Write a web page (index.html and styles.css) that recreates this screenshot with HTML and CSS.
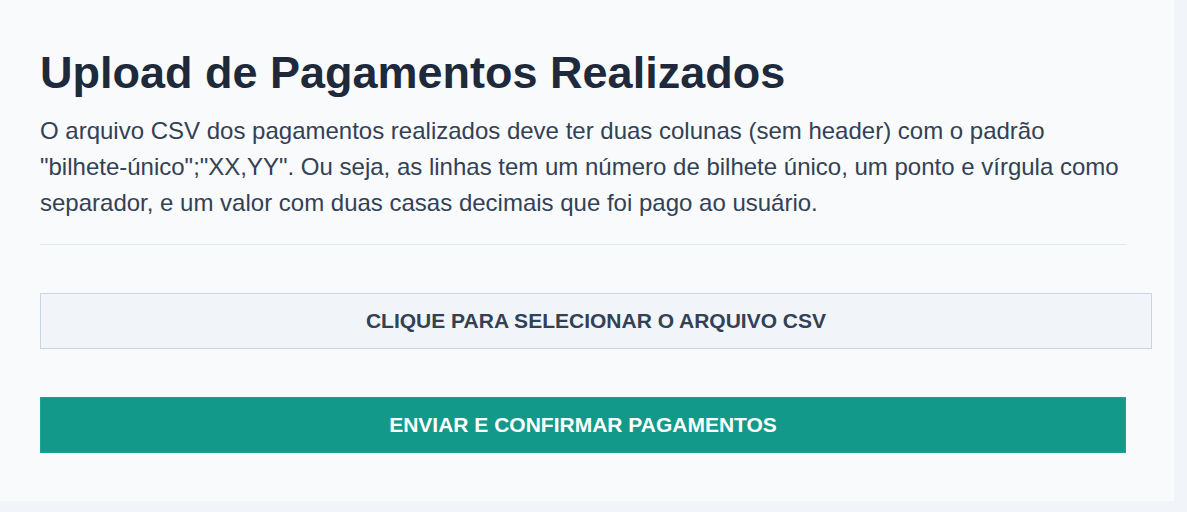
FILE: index.html
```html
<!DOCTYPE html>
<html lang="pt-BR">
<head>
<meta charset="utf-8">
<title>Upload de Pagamentos Realizados</title>
<link rel="stylesheet" href="styles.css">
</head>
<body>
  <main class="card">
    <h1 class="title">Upload de Pagamentos Realizados</h1>
    <p class="desc">O arquivo CSV dos pagamentos realizados deve ter duas colunas (sem header) com o padrão "bilhete-único";"XX,YY". Ou seja, as linhas tem um número de bilhete único, um ponto e vírgula como separador, e um valor com duas casas decimais que foi pago ao usuário.</p>
    <hr class="divider">
    <label class="file-box">
      <input type="file" accept=".csv" class="file-input">
      <span>CLIQUE PARA SELECIONAR O ARQUIVO CSV</span>
    </label>
    <button class="submit" type="button">ENVIAR E CONFIRMAR PAGAMENTOS</button>
  </main>
</body>
</html>
```

FILE: styles.css
```css
* { box-sizing: border-box; }

html, body {
  margin: 0;
  padding: 0;
  background: #f1f5f9;
  font-family: "Liberation Sans", Arial, sans-serif;
}

.card {
  width: 1174px;
  background: #f8fafc;
  padding: 46px 48px 48px 40px;
  display: flex;
  flex-direction: column;
}

.title {
  margin: 0;
  font-size: 45px;
  line-height: 54px;
  font-weight: 700;
  color: #1e293b;
  width: 1086px;
}

.desc {
  margin: 13px 0 0;
  font-size: 24px;
  line-height: 36px;
  color: #334155;
  width: 1086px;
}

.divider {
  margin: 23px 0 0;
  border: 0;
  border-top: 1px solid #e2e8f0;
  width: 1086px;
  height: 0;
}

.file-box {
  margin-top: 48px;
  width: 1112px;
  height: 56px;
  background: #f1f5f9;
  border: 1px solid #cbd5e1;
  display: flex;
  align-items: center;
  justify-content: center;
  font-size: 21px;
  font-weight: 700;
  color: #334155;
  cursor: pointer;
}

.file-input { display: none; }

.submit {
  margin-top: 48px;
  width: 1086px;
  height: 56px;
  background: #13998a;
  border: 1px solid #14a594;
  color: #ffffff;
  font-family: inherit;
  font-size: 21px;
  font-weight: 700;
  padding: 0;
  cursor: pointer;
}
```
